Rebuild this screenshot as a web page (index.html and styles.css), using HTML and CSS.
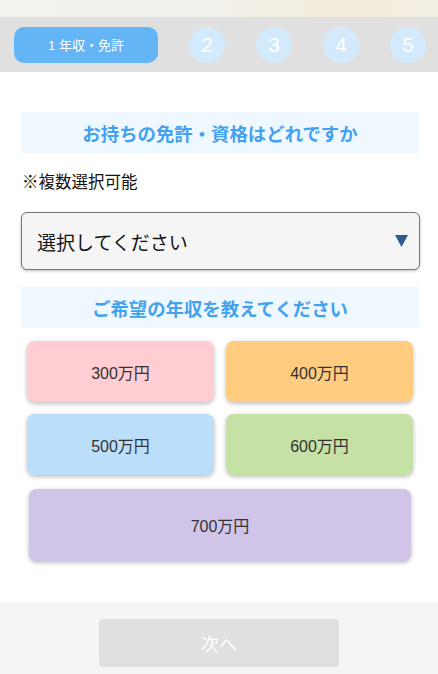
FILE: index.html
```html
<!DOCTYPE html>
<html lang="ja">
<head>
<meta charset="utf-8">
<title>年収・免許</title>
<link rel="stylesheet" href="styles.css">
</head>
<body>
<div class="topstrip"></div>
<nav class="steps">
  <div class="step-active">1 年収・免許</div>
  <div class="step">2</div>
  <div class="step">3</div>
  <div class="step">4</div>
  <div class="step">5</div>
</nav>
<main class="content">
  <h2 class="heading">お持ちの免許・資格はどれですか</h2>
  <p class="note">※複数選択可能</p>
  <div class="select">
    <span class="select-text">選択してください</span>
    <svg class="select-arrow" width="13" height="12" viewBox="0 0 13 12"><polygon points="0,0 13,0 6.5,12" fill="#2d5b91"/></svg>
  </div>
  <h2 class="heading heading-second">ご希望の年収を教えてください</h2>
  <div class="choices">
    <button class="choice c-pink">300万円</button>
    <button class="choice c-orange">400万円</button>
    <button class="choice c-blue">500万円</button>
    <button class="choice c-green">600万円</button>
    <button class="choice c-purple choice-wide">700万円</button>
  </div>
</main>
<footer class="footer">
  <button class="next">次へ</button>
</footer>
</body>
</html>
```
FILE: styles.css
```css
* { box-sizing: border-box; }
html, body { margin: 0; padding: 0; }
body {
  width: 438px;
  height: 674px;
  overflow: hidden;
  background: #ffffff;
  font-family: "Liberation Sans", "Noto Sans CJK JP", sans-serif;
  color: #222;
}
.topstrip {
  height: 17px;
  background: linear-gradient(90deg, #f3f2ee 0%, #f2f0ea 50%, #f3ecdc 80%, #f4efe4 100%);
}
.steps {
  height: 55px;
  background: #e0e0e0;
  display: flex;
  align-items: center;
  padding-left: 14px;
  gap: 31px;
}
.step-active {
  width: 144px;
  height: 36px;
  border-radius: 10px;
  background: #64b5f6;
  color: #fff;
  font-size: 13px;
  display: flex;
  align-items: center;
  justify-content: center;
}
.step {
  width: 36px;
  height: 36px;
  border-radius: 50%;
  background: #d3eafc;
  color: #fff;
  font-size: 21px;
  display: flex;
  align-items: center;
  justify-content: center;
}
.content {
  padding: 40px 19px 0 21px;
  height: 530px;
}
.heading {
  margin: 0;
  height: 41px;
  background: #f0f8ff;
  color: #42a2f0;
  font-size: 18.4px;
  font-weight: bold;
  display: flex;
  align-items: center;
  justify-content: center;
}
.note {
  margin: 18px 0 0 1px;
  font-size: 16.5px;
  line-height: 22px;
  color: #111;
}
.select {
  margin-top: 19px;
  margin-right: -1px;
  height: 58px;
  border: 1px solid #777;
  border-radius: 6px;
  background: #f5f5f5;
  box-shadow: 0 1px 3px rgba(0,0,0,0.25);
  display: flex;
  align-items: center;
  justify-content: space-between;
  padding: 0 11px 0 15px;
}
.select-text {
  font-size: 19px;
  color: #111;
}
.select-arrow {
  display: block;
}
.heading-second {
  margin-top: 17px;
}
.choices {
  margin-top: 13px;
  padding: 0 6px;
  display: grid;
  grid-template-columns: 1fr 1fr;
  gap: 12px;
}
.choice {
  height: 61px;
  border: none;
  border-radius: 8px;
  font-family: inherit;
  font-size: 16px;
  color: #333;
  box-shadow: 0 2px 4px rgba(0,0,0,0.22), 0 0 6px rgba(0,0,0,0.06);
}
.choice-wide {
  grid-column: 1 / 3;
  height: 72px;
  margin: 2px 2px 0;
}
.c-pink { background: #ffcdd2; }
.c-orange { background: #ffcc80; }
.c-blue { background: #bbdefb; }
.c-green { background: #c5e1a5; }
.c-purple { background: #d1c4e9; }
.footer {
  height: 72px;
  background: #f5f5f5;
  display: flex;
  justify-content: center;
  padding-top: 17px;
}
.next {
  width: 240px;
  height: 48px;
  border: none;
  border-radius: 4px;
  background: #e0e0e0;
  color: #fff;
  font-family: inherit;
  font-size: 18px;
}
```
